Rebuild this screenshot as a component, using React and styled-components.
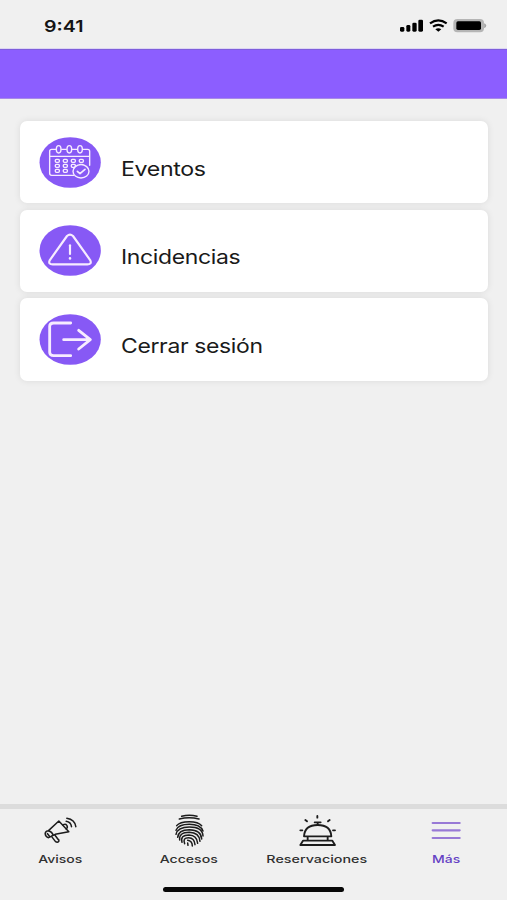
import styled, { createGlobalStyle } from 'styled-components';

const GlobalStyle = createGlobalStyle`
  * {
    box-sizing: border-box;
  }
  body {
    margin: 0;
    background-color: #f0f0f0;
    font-family: Inter, 'Liberation Sans', sans-serif;
  }
`;

const Screen = styled.div`
  width: 507px;
  height: 900px;
  display: flex;
  flex-direction: column;
  background-color: #f0f0f0;
  overflow: hidden;
`;

const StatusBar = styled.div`
  height: 49px;
  padding: 0 19px 0 44px;
  display: flex;
  align-items: center;
  justify-content: space-between;
  border-bottom: 1px solid #dcd5f2;
`;

const Time = styled.span`
  font-size: 16.2px;
  font-weight: 600;
  line-height: 20px;
  margin-top: 3px;
  color: #141414;
  transform: scaleX(1.21);
  transform-origin: left;
`;

const StatusIcons = styled.svg`
  width: 90px;
  height: 16px;
  margin-top: 4px;
`;

const Header = styled.header`
  height: 50px;
  background-color: #8c5eff;
  border-top: 1px solid #7e5edc;
  border-bottom: 1px solid #a88ae8;
`;

const Menu = styled.main`
  flex: 1;
  padding: 22px 19px 0 20px;
  display: flex;
  flex-direction: column;
  gap: 6.2px;
`;

const Card = styled.div`
  height: 82.4px;
  padding: 0 19px;
  display: flex;
  align-items: center;
  gap: 20px;
  background-color: white;
  border-radius: 7px;
  box-shadow: 0 0 7px rgba(0, 0, 0, 0.09);
`;

const CardIcon = styled.svg`
  width: 62px;
  height: 51px;
  fill: none;
  stroke: #f7ecff;
  stroke-linecap: round;
  stroke-linejoin: round;
`;

const CardLabel = styled.span`
  font-size: 19.8px;
  line-height: 24px;
  margin-top: 13px;
  letter-spacing: -0.3px;
  color: #1a1a1a;
  transform: scaleX(${(props) => props.$stretch});
  transform-origin: left;
`;

const TabBar = styled.nav`
  height: 96px;
  margin: 0 -3px 0 -4px;
  padding-top: 3px;
  display: grid;
  grid-template-columns: repeat(4, 1fr);
  border-top: 5px solid #dcdcdc;
`;

const Tab = styled.div`
  display: flex;
  flex-direction: column;
  align-items: center;
  color: ${(props) => (props.$active ? '#6541c4' : '#303030')};
`;

const TabIcon = styled.svg`
  width: 40px;
  height: 36px;
  fill: none;
  stroke: ${(props) => props.$color || '#1c1c1c'};
  stroke-linecap: round;
  stroke-linejoin: round;
`;

const TabLabel = styled.span`
  font-size: 11px;
  font-weight: 500;
  line-height: 14px;
  margin-top: 4px;
  transform: scaleX(${(props) => props.$stretch});
`;

const HomeIndicator = styled.div`
  width: 181px;
  height: 5px;
  margin: -13px auto 8px;
  flex-shrink: 0;
  border-radius: 3px;
  background-color: #080808;
`;

const Disc = () => (
  <ellipse cx="120.5" cy="97.5" rx="92" ry="76" fill="#8759f5" stroke="none" />
);

const CalendarIcon = () => (
  <CardIcon viewBox="27 21 186 153" strokeWidth="4.2">
    <Disc />
    <path d="M78 58H65q-6 0-6 6v66q0 6 6 6h66M95 58h14M127 58h14M159 58h14q6 0 6 6v42M59 79h120" />
    {[86, 118, 150].map((x) => (
      <ellipse key={x} cx={x} cy="58" rx="7" ry="11" />
    ))}
    {[92, 107, 122].map((y, row) =>
      [82, 106, 130, 154].slice(0, row === 2 ? 2 : 4).map((x) => (
        <rect key={`${x}-${y}`} x={x - 6} y={y - 4} width="12" height="9" rx="3" />
      ))
    )}
    <ellipse cx="153" cy="124" rx="24" ry="20" fill="#8759f5" />
    <path d="M142 124l8 7 15-13" strokeWidth="5" />
  </CardIcon>
);

const WarningIcon = () => (
  <CardIcon viewBox="27 21 186 153" strokeWidth="6.5">
    <Disc />
    <path d="M111 54q9-8 18 0l52 73q5 12-9 12H68q-14 0-9-12z" />
    <path d="M120 82v26" strokeWidth="6.5" />
    <path d="M120 120.500v1" strokeWidth="7.5" />
  </CardIcon>
);

const LogoutIcon = () => (
  <CardIcon viewBox="27 21 186 153" strokeWidth="8.5">
    <Disc />
    <path d="M122 48H71q-12 0-12 10v78q0 10 12 10h51M101 98h78M146 70l35 28-35 28" />
  </CardIcon>
);

const MegaphoneIcon = () => (
  <TabIcon viewBox="61.5 36 120 108" strokeWidth="4.500">
    <path d="M118 63l30 32-41 8-20 10q-9-2-10-12 1-9 10-9z" />
    <path d="M87 92q11 3 14 13M84 101l7 9M96 109l12 16q6 4 10-1 2-4-3-7l-9-12" />
    <path d="M130 75q8-5 12 1t-2 11" />
    <path d="M140 64q14 2 16 16M142 55q24 4 27 25" />
  </TabIcon>
);

const FingerprintIcon = () => (
  <TabIcon viewBox="71 36 120 108" strokeWidth="4.500">
    <path d="M109 49q23-6 46 0M102 57q29-8 59 0" />
    <path d="M94 77q9-12 38-12 27 0 37 12" />
    <path d="M92 91q7-18 40-18t41 20" />
    <path d="M92 103q5-22 40-22 40 0 41 27" />
    <path d="M97 112q2-23 35-23 36 1 37 28" />
    <path d="M103 120q-3-23 29-23 30 1 32 27" />
    <path d="M110 127q-6-22 21-22 24 1 26 25" />
    <path d="M118 131q-7-18 12-18 17 0 19 21" />
    <path d="M127 121q14 2 14 17M127 129l1 7" />
  </TabIcon>
);

const BellIcon = () => (
  <TabIcon viewBox="112 36 120 108" strokeWidth="5.6">
    <path d="M133 109q2-34 41-34t41 34z" />
    <path d="M165 67h18M174 68v6M144 112v9M204 112v9M130 122h88l8 13H122z" />
    <path d="M173 48v5M137 60l5 4M210 60l-5 4M122 91h6M220 91h6" />
  </TabIcon>
);

const MenuIcon = () => (
  <TabIcon viewBox="78 36 120 108" strokeWidth="6.5" $color="#9879d6">
    <path d="M98 69h81M98 91h81M98 114h81" />
  </TabIcon>
);

const options = [
  { label: 'Eventos', icon: CalendarIcon, stretch: 1.17 },
  { label: 'Incidencias', icon: WarningIcon, stretch: 1.16 },
  { label: 'Cerrar sesión', icon: LogoutIcon, stretch: 1.16 },
];

const tabs = [
  { label: 'Avisos', icon: MegaphoneIcon, stretch: 1.27 },
  { label: 'Accesos', icon: FingerprintIcon, stretch: 1.28 },
  { label: 'Reservaciones', icon: BellIcon, stretch: 1.3 },
  { label: 'Más', icon: MenuIcon, stretch: 1.27, active: true },
];

const App = () => {
  return (
    <>
      <GlobalStyle />
      <Screen>
        <StatusBar>
          <Time>9:41</Time>
          <StatusIcons viewBox="54 54 270 48">
            <rect x="60" y="81" width="13" height="14" rx="4" />
            <rect x="79" y="75" width="12" height="20" rx="4" />
            <rect x="97" y="68" width="13" height="27" rx="4" />
            <rect x="115" y="59" width="14" height="36" rx="4" />
            <path
              d="M150 70q25-18 50 0M159 80q16-11 32 0"
              fill="none"
              stroke="#000"
              strokeWidth="6.5"
            />
            <path d="M166 88q9-6 18 0l-9 7z" />
            <rect x="220" y="57" width="92" height="40" rx="12" fill="#b5b5b5" />
            <path d="M314 71q7 6 0 12z" fill="#999" stroke="#999" strokeWidth="2" />
            <rect x="229" y="64" width="74" height="26" rx="5" />
          </StatusIcons>
        </StatusBar>
        <Header />
        <Menu>
          {options.map(({ label, icon: Icon, stretch }) => (
            <Card key={label}>
              <Icon />
              <CardLabel $stretch={stretch}>{label}</CardLabel>
            </Card>
          ))}
        </Menu>
        <TabBar>
          {tabs.map(({ label, icon: Icon, stretch, active }) => (
            <Tab key={label} $active={active}>
              <Icon />
              <TabLabel $stretch={stretch}>{label}</TabLabel>
            </Tab>
          ))}
        </TabBar>
        <HomeIndicator />
      </Screen>
    </>
  );
};

export default App;
